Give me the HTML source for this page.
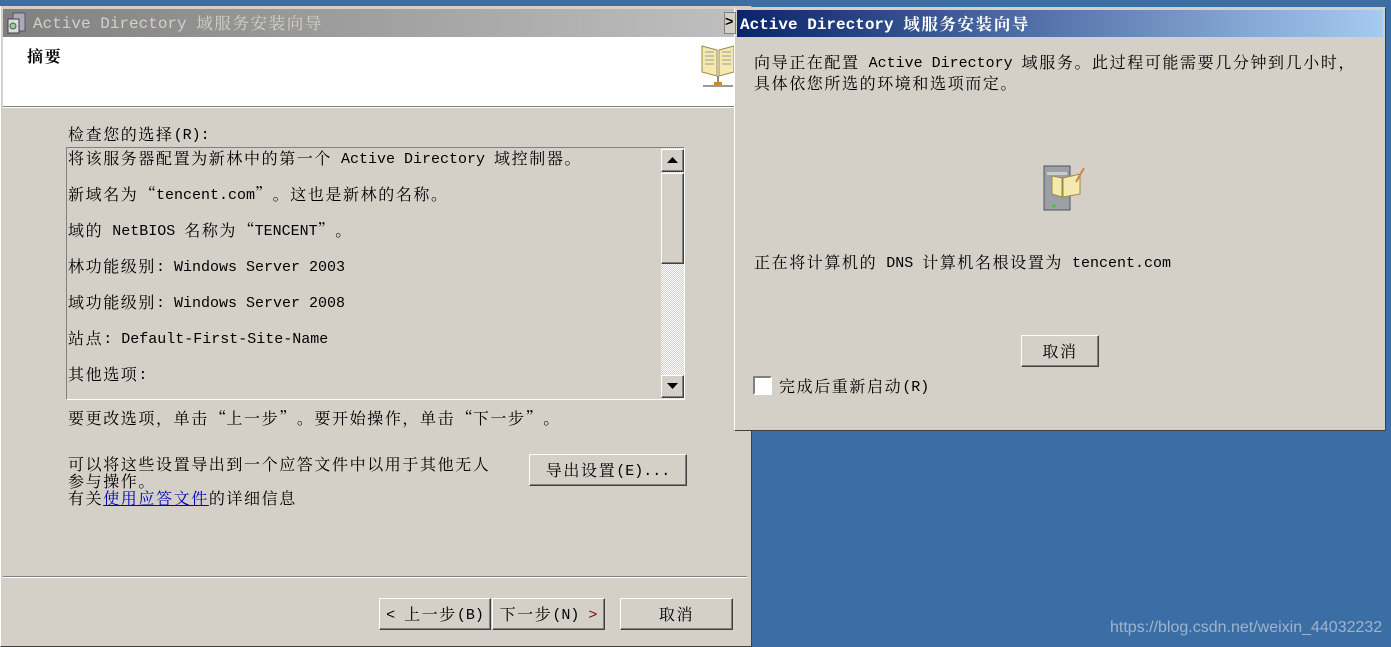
<!DOCTYPE html>
<html><head><meta charset="utf-8"><style>
*{margin:0;padding:0;box-sizing:border-box}
body{width:1391px;height:647px;background:#3a6ea5;position:relative;overflow:hidden;font-family:"Noto Serif CJK SC","Noto Sans CJK SC",serif;font-size:16px;letter-spacing:1.6px;color:#000}
.a{position:absolute}
.t{position:absolute;white-space:nowrap;line-height:20px}
.l{font-family:"Liberation Mono",monospace;font-size:15px;letter-spacing:0;position:relative;top:-1px}
.ql,.qr{display:inline-block;width:17.6px;letter-spacing:0}
.ql{text-align:right}.qr{text-align:left}
.btn{position:absolute;background:#d4d0c8;border:1px solid;border-color:#fff #404040 #404040 #fff;box-shadow:inset -1px -1px 0 #808080;text-align:center;line-height:30px;white-space:nowrap}
</style></head><body>
<!-- left window -->
<div class="a" style="left:0;top:6px;width:752px;height:641px;background:#d4d0c8;border:1px solid;border-color:#d4d0c8 #404040 #404040 #fff"></div>
<div class="a" style="left:3px;top:9px;width:744px;height:28px;background:linear-gradient(90deg,#808080,#c0c0c0)"></div>
<svg class="a" style="left:6px;top:11px" width="22" height="24"><rect x="7" y="2" width="12" height="18" fill="#aab" stroke="#556"/><rect x="2" y="8" width="11" height="14" fill="#ddd" stroke="#444"/><circle cx="7" cy="15" r="3" fill="#9c9" stroke="#555"/></svg>
<div class="t" style="left:33px;top:12px;color:#d4d0c8;font-size:16.5px"><span class="l" style="font-size:16px">Active Directory </span>域服务安装向导</div>
<div class="a" style="left:3px;top:37px;width:744px;height:70px;background:#fff;border-bottom:1px solid #808080"></div>
<div class="a" style="left:3px;top:107px;width:744px;height:1px;background:#fff"></div>
<div class="t" style="left:27px;top:46px;font-weight:bold">摘要</div>
<svg class="a" style="left:700px;top:42px" width="36" height="48"><path d="M2 4 L17 8 L17 34 L2 30Z M19 8 L34 4 L34 30 L19 34Z" fill="#f4eab0" stroke="#a08a40"/><path d="M5 10 H14 M5 14 H14 M5 18 H14 M5 22 H14 M22 10 H31 M22 14 H31 M22 18 H31 M22 22 H31" stroke="#999" stroke-width="1"/><path d="M18 34 L18 42" stroke="#888" stroke-width="2"/><rect x="14" y="40" width="8" height="5" fill="#d08a20"/><path d="M3 44 H33" stroke="#999" stroke-width="2"/></svg>
<div class="t" style="left:68px;top:124px">检查您的选择<span class="l">(R):</span></div>
<div class="a" style="left:66px;top:147px;width:619px;height:253px;border:1px solid;border-color:#808080 #fff #fff #808080"></div>
<div class="t" style="left:68px;top:148px">将该服务器配置为新林中的第一个<span class="l"> Active Directory </span>域控制器。</div>
<div class="t" style="left:68px;top:184px">新域名为<span class="ql">“</span><span class="l">tencent.com</span><span class="qr">”</span>。这也是新林的名称。</div>
<div class="t" style="left:68px;top:220px">域的<span class="l"> NetBIOS </span>名称为<span class="ql">“</span><span class="l">TENCENT</span><span class="qr">”</span>。</div>
<div class="t" style="left:68px;top:256px">林功能级别<span class="l">: Windows Server 2003</span></div>
<div class="t" style="left:68px;top:292px">域功能级别<span class="l">: Windows Server 2008</span></div>
<div class="t" style="left:68px;top:328px">站点<span class="l">: Default-First-Site-Name</span></div>
<div class="t" style="left:68px;top:364px">其他选项<span class="l">:</span></div>
<div class="a" style="left:661px;top:148px;width:23px;height:251px;background:repeating-conic-gradient(#fff 0 25%,#d4d0c8 0 50%) 0 0/2px 2px"></div>
<div class="btn" style="left:661px;top:149px;width:23px;height:23px"></div>
<svg class="a" style="left:667px;top:157px" width="11" height="7"><path d="M5.5 0 L11 6 L0 6Z"/></svg>
<div class="btn" style="left:661px;top:173px;width:23px;height:91px"></div>
<div class="btn" style="left:661px;top:375px;width:23px;height:23px"></div>
<svg class="a" style="left:667px;top:383px" width="11" height="7"><path d="M0 0 L11 0 L5.5 6Z"/></svg>
<div class="t" style="left:68px;top:408px">要更改选项，单击<span class="ql">“</span>上一步<span class="qr">”</span>。要开始操作，单击<span class="ql">“</span>下一步<span class="qr">”</span>。</div>
<div class="t" style="left:68px;top:455px;line-height:17px">可以将这些设置导出到一个应答文件中以用于其他无人<br>参与操作。</div>
<div class="t" style="left:68px;top:489px;line-height:17px">有关<span style="color:#0000c0;text-decoration:underline">使用应答文件</span>的详细信息</div>
<div class="btn" style="left:529px;top:454px;width:158px;height:32px">导出设置<span class="l">(E)...</span></div>
<div class="a" style="left:3px;top:576px;width:744px;height:1px;background:#808080"></div>
<div class="a" style="left:3px;top:577px;width:744px;height:1px;background:#fff"></div>
<div class="btn" style="left:379px;top:598px;width:112px;height:32px"><span class="l">&lt; </span>上一步<span class="l">(B)</span></div>
<div class="btn" style="left:492px;top:598px;width:113px;height:32px">下一步<span class="l">(N) <span style="color:#800">&gt;</span></span></div>
<div class="btn" style="left:620px;top:598px;width:113px;height:32px">取消</div>
<!-- right window -->
<div class="a" style="left:734px;top:7px;width:652px;height:424px;background:#d4d0c8;border:1px solid;border-color:#d4d0c8 #404040 #404040 #fff"></div>
<div class="a" style="left:737px;top:10px;width:646px;height:27px;background:linear-gradient(90deg,#0a246a,#a6caf0)"></div>
<div class="t" style="left:740px;top:13px;color:#fff;font-weight:bold;font-size:16.5px"><span class="l" style="font-size:16px;font-weight:bold">Active Directory </span>域服务安装向导</div>
<div class="a" style="left:724px;top:12px;width:12px;height:22px;background:#d4d0c8;border:1px solid #808080;font-family:'Liberation Mono',monospace;font-size:14px;line-height:20px;font-weight:bold;letter-spacing:0">&gt;</div>
<div class="t" style="left:754px;top:53px;line-height:18px">向导正在配置<span class="l"> Active Directory </span>域服务。此过程可能需要几分钟到几小时，<br>具体依您所选的环境和选项而定。</div>
<svg class="a" style="left:1042px;top:164px" width="44" height="48"><rect x="2" y="2" width="26" height="44" fill="#9aa0a6" stroke="#555"/><rect x="5" y="8" width="20" height="3" fill="#ccc"/><circle cx="12" cy="42" r="1.5" fill="#3c3"/><path d="M10 12 L20 14 L20 33 L10 30Z M21 14 L38 10 L38 30 L21 33Z" fill="#f4eab0" stroke="#a08a40"/><path d="M34 18 L42 4" stroke="#c84" stroke-width="2"/></svg>
<div class="t" style="left:754px;top:252px">正在将计算机的<span class="l"> DNS </span>计算机名根设置为<span class="l"> tencent.com</span></div>
<div class="btn" style="left:1021px;top:335px;width:78px;height:32px">取消</div>
<div class="a" style="left:753px;top:376px;width:19px;height:19px;background:#fff;border:2px solid;border-color:#808080 #fff #fff #808080"></div>
<div class="t" style="left:779px;top:376px">完成后重新启动<span class="l">(R)</span></div>
<div class="t" style="left:1110px;top:618px;color:#9fb4cc;font-family:'Liberation Sans',sans-serif;font-size:16px;letter-spacing:0">https://blog.csdn.net/weixin_44032232</div>
</body></html>
